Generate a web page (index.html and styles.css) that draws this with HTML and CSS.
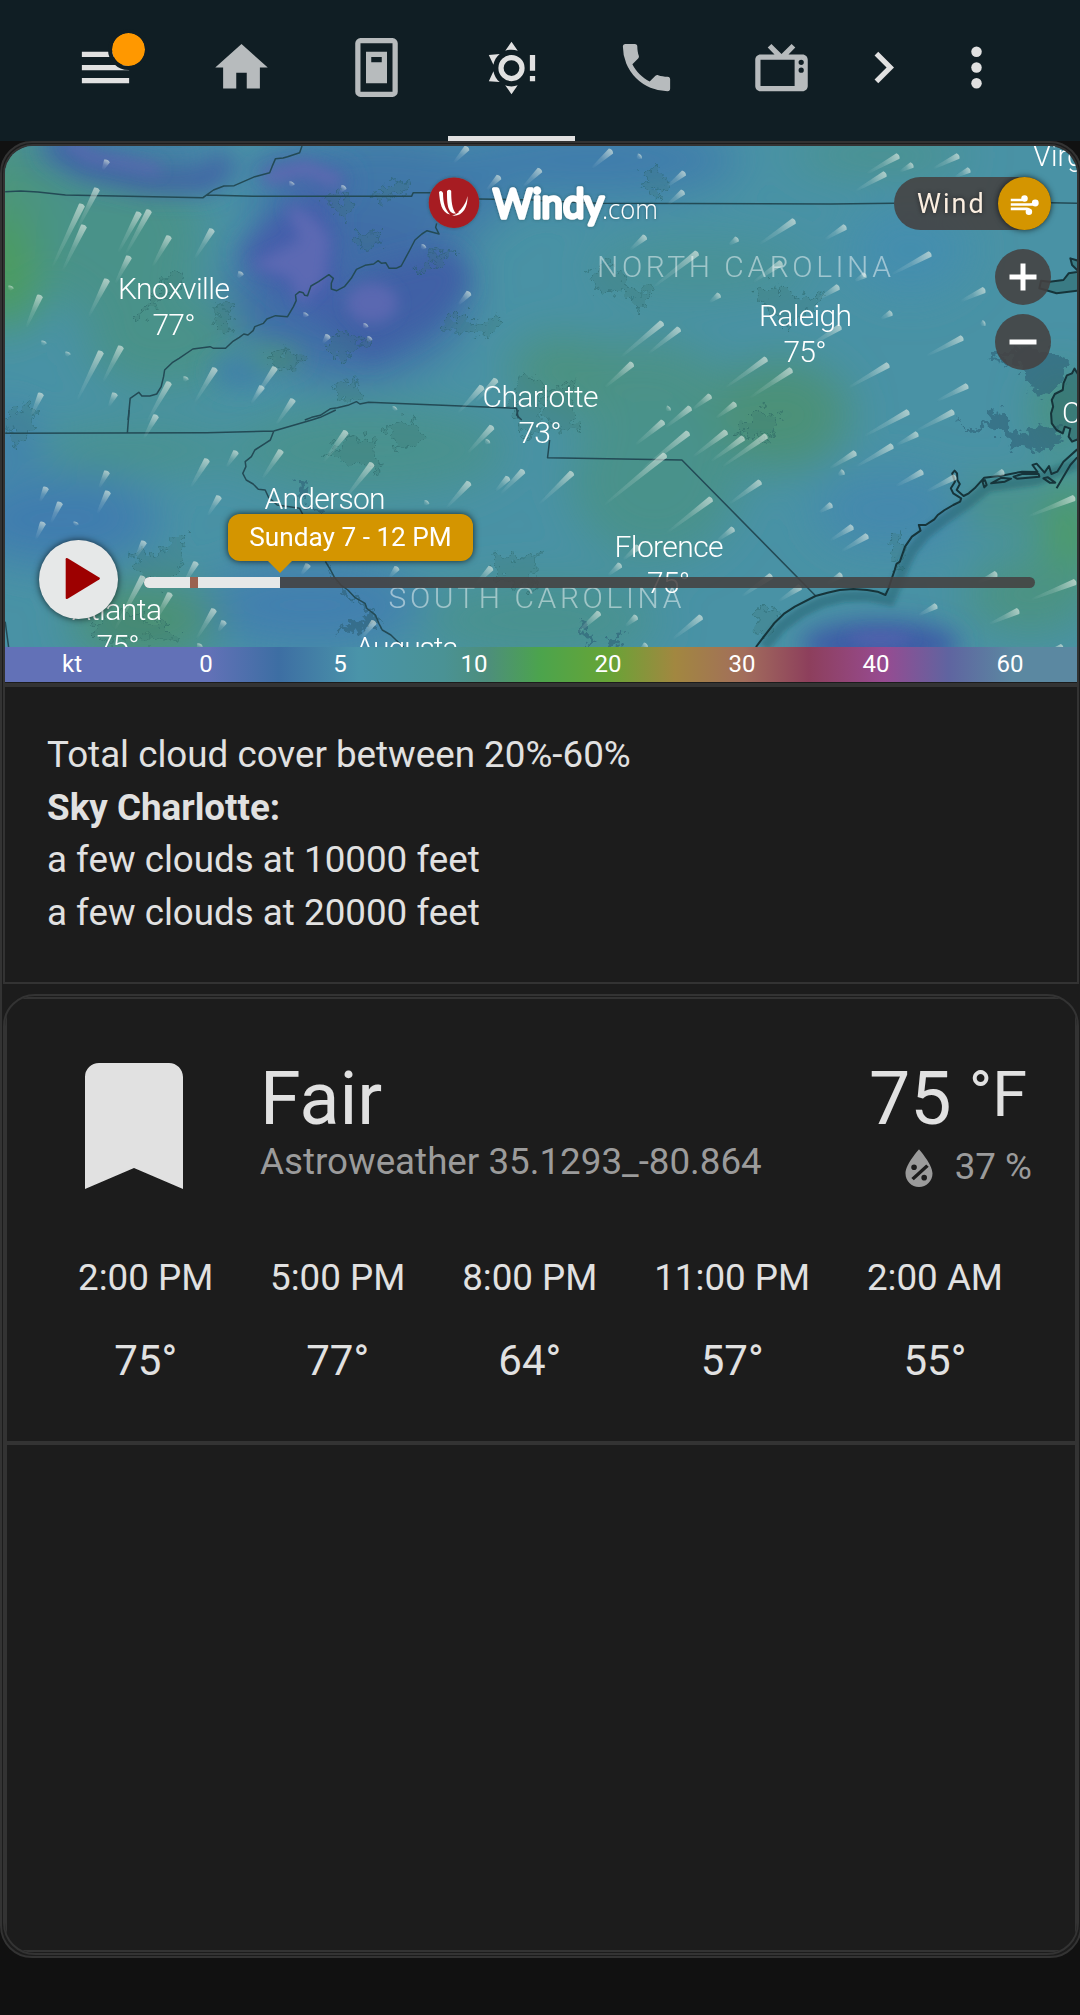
FILE: index.html
```html
<!DOCTYPE html>
<html lang="en">
<head>
<meta charset="utf-8">
<title>Weather</title>
<link rel="stylesheet" href="styles.css">
</head>
<body>
<header class="topbar">
  <button class="menu">
    <svg class="icon" viewBox="0 0 24 24"><path d="M3 6h18v2H3zM3 11h18v2H3zM3 16h18v2H3z"/></svg>
    <span class="dot"></span>
  </button>
  <nav class="tabs">
    <a class="tab"><svg class="icon" viewBox="0 0 24 24"><path d="M10 20v-6h4v6h5v-8h3L12 3 2 12h3v8z"/></svg></a>
    <a class="tab"><svg class="icon" viewBox="0 0 24 24"><path fill-rule="evenodd" d="M5.9 .8H18.1A2 2 0 0 1 20.1 2.8V21.2A2 2 0 0 1 18.1 23.2H5.9A2 2 0 0 1 3.9 21.2V2.800A2 2 0 0 1 5.900 .8zM5.9 2.800V21.200H18.100V2.800zM8 6h8v12H8zM10 8v2h4V8z"/></svg></a>
    <a class="tab active"><svg class="icon" viewBox="0 0 24 24"><path d="M12,7A5,5 0 0,1 17,12A5,5 0 0,1 12,17A5,5 0 0,1 7,12A5,5 0 0,1 12,7M12,9A3,3 0 0,0 9,12A3,3 0 0,0 12,15A3,3 0 0,0 15,12A3,3 0 0,0 12,9M12,2L14.390,5.420C13.650,5.150 12.840,5 12,5C11.160,5 10.350,5.150 9.610,5.420L12,2M3.340,7L7.500,6.650C6.900,7.160 6.360,7.780 5.940,8.500C5.500,9.240 5.250,10 5.110,10.790L3.340,7M3.360,17L5.120,13.230C5.260,14 5.530,14.780 5.950,15.500C6.370,16.240 6.910,16.860 7.500,17.370L3.360,17M12,22L9.590,18.560C10.330,18.830 11.140,19 12,19C12.820,19 13.630,18.830 14.370,18.560L12,22M19,13V7h2v6zM19,17v-2h2v2z"/></svg></a>
    <a class="tab"><svg class="icon" viewBox="0 0 24 24"><path d="M6.620,10.790C8.060,13.620 10.380,15.940 13.210,17.380L15.410,15.180C15.690,14.900 16.080,14.820 16.430,14.930C17.550,15.300 18.750,15.500 20,15.500A1,1 0 0,1 21,16.500V20A1,1 0 0,1 20,21A17,17 0 0,1 3,4A1,1 0 0,1 4,3H7.500A1,1 0 0,1 8.500,4C8.500,5.250 8.700,6.450 9.070,7.570C9.180,7.920 9.100,8.310 8.820,8.590L6.620,10.790Z"/></svg></a>
    <a class="tab"><svg class="icon" viewBox="0 0 24 24"><path fill-rule="evenodd" d="M8.160,3L6.750,4.410L9.340,7H4C2.890,7 2,7.890 2,9V19C2,20.110 2.890,21 4,21H20C21.110,21 22,20.110 22,19V9C22,7.890 21.110,7 20,7H14.660L17.250,4.410L15.840,3L12,6.840ZM4,9H17V19H4ZM19.500,9a1,1 0 1,1 0,2a1,1 0 1,1 0,-2M19.500,12a1,1 0 1,1 0,2a1,1 0 1,1 0,-2"/></svg></a>
  </nav>
  <button class="next"><svg class="icon" viewBox="0 0 24 24"><path d="M8.590,16.580L13.170,12L8.590,7.410L10,6L16,12L10,18Z"/></svg></button>
  <button class="more"><svg class="icon" viewBox="0 0 24 24"><circle cx="12" cy="6" r="2"/><circle cx="12" cy="12" r="2"/><circle cx="12" cy="18" r="2"/></svg></button>
</header>

<main class="stack">
  <section class="map-card">
    <div class="map">
      <svg class="terrain" viewBox="5 146 1072 501">
        <defs>
          <filter id="soft" x="-50%" y="-50%" width="200%" height="200%"><feGaussianBlur stdDeviation="22"/></filter>
          <filter id="mid" x="-50%" y="-50%" width="200%" height="200%"><feGaussianBlur stdDeviation="12"/></filter>
          <filter id="fine" x="-50%" y="-50%" width="200%" height="200%"><feGaussianBlur stdDeviation="7"/></filter>
          <filter id="feather"><feGaussianBlur stdDeviation=".7"/></filter>
          <filter id="ragged" filterUnits="userSpaceOnUse" x="0" y="140" width="1080" height="520"><feTurbulence type="fractalNoise" baseFrequency=".11" numOctaves="3" seed="4"/><feDisplacementMap in="SourceGraphic" scale="24" xChannelSelector="R" yChannelSelector="G"/></filter>
          <filter id="glow" x="-20%" y="-40%" width="140%" height="180%"><feDropShadow dx="0" dy="0" stdDeviation="1.800" flood-color="#244" flood-opacity=".6"/></filter>
          <linearGradient id="tail"><stop offset="0" stop-color="#fff" stop-opacity="0"/><stop offset=".5" stop-color="#dce8e0" stop-opacity=".2"/><stop offset="1" stop-color="#dce8e0" stop-opacity=".68"/></linearGradient>
        </defs>
        <rect x="0" y="140" width="1080" height="520" fill="#4992a5"/>
        <g filter="url(#soft)">
          <ellipse cx="5" cy="245" rx="45" ry="85" fill="#4c9b60"/>
          <ellipse cx="30" cy="175" rx="60" ry="50" fill="#4b957b"/>
          <ellipse cx="120" cy="240" rx="85" ry="80" fill="#4a9289"/>
          <ellipse cx="165" cy="340" rx="80" ry="50" fill="#4a9289"/>
          <ellipse cx="380" cy="190" rx="130" ry="60" fill="#4078a8"/>
          <ellipse cx="350" cy="290" rx="120" ry="90" fill="#3f6da7"/>
          <ellipse cx="590" cy="160" rx="150" ry="38" fill="#417dac"/>
          <ellipse cx="120" cy="150" rx="100" ry="22" fill="#4078a8"/>
          <ellipse cx="60" cy="520" rx="100" ry="45" fill="#417daf"/>
          <ellipse cx="10" cy="440" rx="25" ry="30" fill="#417daf"/>
          <ellipse cx="310" cy="605" rx="110" ry="45" fill="#4280af"/>
          <ellipse cx="780" cy="415" rx="70" ry="55" fill="#4c9178"/>
          <ellipse cx="640" cy="385" rx="85" ry="45" fill="#4b9287"/>
          <ellipse cx="655" cy="480" rx="85" ry="80" fill="#4a928b"/>
          <ellipse cx="560" cy="370" rx="50" ry="35" fill="#4b9280"/>
          <ellipse cx="370" cy="450" rx="140" ry="45" fill="#4a928e"/>
          <ellipse cx="145" cy="620" rx="75" ry="40" fill="#4b9174"/>
          <ellipse cx="140" cy="450" rx="100" ry="22" fill="#4a928c"/>
          <ellipse cx="540" cy="620" rx="120" ry="40" fill="#49928f"/>
          <ellipse cx="1070" cy="540" rx="28" ry="65" fill="#4e9c62"/>
          <ellipse cx="1030" cy="595" rx="65" ry="40" fill="#4b9383"/>
          <ellipse cx="1000" cy="505" rx="65" ry="20" fill="#4b9383"/>
          <ellipse cx="890" cy="510" rx="75" ry="40" fill="#4489ad"/>
          <ellipse cx="910" cy="250" rx="60" ry="45" fill="#458eae"/>
          <ellipse cx="700" cy="270" rx="110" ry="30" fill="#4a9295"/>
          <ellipse cx="880" cy="155" rx="90" ry="16" fill="#4b9388"/>
          <ellipse cx="1060" cy="410" rx="24" ry="40" fill="#4a9378"/>
        </g>
        <g filter="url(#mid)">
          <path d="M50 140L85 163L150 180L205 180L230 160" fill="none" stroke="#3f60a5" stroke-width="24"/>
          <ellipse cx="240" cy="372" rx="28" ry="16" fill="#4080a9"/>
          <ellipse cx="275" cy="357" rx="28" ry="10" fill="#4b937f"/>
          <path d="M240 255L280 210L330 195L340 290L320 320L280 290Z" fill="#455fab"/>
          <path d="M320 320L370 270L450 250L470 280L440 320L370 360Z" fill="#3f61a6"/>
          <path d="M250 165L290 160L350 172L345 198L290 190Z" fill="#4468a9"/>
          <ellipse cx="880" cy="645" rx="80" ry="24" fill="#3c5ca6"/>
        </g>
        <g filter="url(#fine)">
          <path d="M66 140L90 157L160 170" fill="none" stroke="#5f69b3" stroke-width="8"/>
          <path d="M265 178L305 168L340 182" fill="none" stroke="#6069b2" stroke-width="12"/>
          <path d="M285 205Q315 210 330 240L325 280L300 305L290 278L250 265L300 240Z" fill="#5c69b3"/>
          <ellipse cx="372" cy="303" rx="26" ry="20" fill="#5a68b1"/>
          <ellipse cx="880" cy="639" rx="32" ry="6" fill="#5463ae"/>
        </g>

        <g class="urban" filter="url(#ragged)">
          <path d="M130 320L145 305L160 290L170 270L182 275L180 290L160 300L145 312L132 322Z"/>
          <path d="M215 305H230L232 320L225 335L215 325Z"/>
          <path d="M320 195L340 192L350 205L348 220L330 208ZM375 200L385 185L415 177L405 190L390 200ZM355 235L380 232L378 245L362 250ZM415 275L430 255L455 250L440 262L425 270Z"/>
          <path d="M265 355L290 350L305 357L285 372ZM325 345L340 330L370 343L350 350L345 365ZM335 385L355 378L360 400L340 400Z"/>
          <path d="M440 330L460 310L475 325L500 318L490 335L460 330ZM520 375L540 380V430L525 440L510 405Z"/>
          <path d="M590 275L610 262L630 290L655 290L640 310L625 292L600 290ZM755 290L780 285L795 300L825 290L810 310L785 330L770 310Z"/>
          <path d="M325 455L350 435L375 440L380 470L355 465ZM385 425L415 420L425 440L400 450Z"/>
          <path d="M540 385L560 390L580 375L570 400L580 430L550 430ZM735 435L760 410L780 415L770 440Z"/>
          <path d="M130 550L155 555L185 530L180 570L160 590L140 570ZM90 630L120 610L165 625L180 640H100Z"/>
          <path d="M5 420L30 400L35 430L15 445ZM490 555L520 560L535 550V590L500 580ZM760 605L780 612L765 640L755 625ZM890 540L900 530L905 550L895 570Z"/>
          <path d="M642 172L655 168L668 182L660 200L650 188Z"/>
        </g>
        <g class="water" filter="url(#ragged)">
          <path d="M992 350L1005 372L1002 352L1025 372L1030 392L1045 395L1062 382L1068 362L1045 350Z"/>
          <path d="M955 420L972 430L990 422L992 408L1005 415L1015 435L1040 428L1060 425L1058 445L1032 452L1012 447L1000 432L988 428L972 434Z"/>
          <path d="M297 480L305 475L310 485L300 500L318 510L330 530L300 500ZM335 635L352 622L375 615L370 628ZM578 622L588 645H595L583 620ZM610 640L620 632L618 648H608Z"/>
          <path d="M325 560L345 590L375 610L382 628L374 616L340 590Z"/>
        </g>

        <g class="borders">
          <path transform="translate(0 140) scale(.34438 .33333)" d="M15 155L60 153L110 156L190 165L590 173L600 165L735 169L1195 169L1200 158L1250 158M1391 177L1568 180M877 18L870 38L835 50L822 54L800 56L790 80L783 98L740 110L700 128L680 137L650 138L620 150L590 172M1268 250L1265 262L1275 282L1240 272L1225 282L1205 300L1190 330L1165 378L1150 385L1130 385L1120 368L1108 370L1098 362L1085 372L1060 376L1035 388L1020 415L1000 440L978 452L962 447V430L968 415L955 404L925 425L903 438L893 467L885 466L880 458L870 455L858 465L860 482L852 500L835 530L800 527L775 537L765 550L740 560L735 572L720 585L708 582L695 592L675 605L655 625H620L610 620L560 627L520 655L500 668L478 690L475 710L468 740L455 762L435 768L412 768L403 757L378 775L372 840M885 840L905 832L930 826L960 806L980 803L1010 796L1035 785L1045 792L1070 787L1500 805L1505 835"/>
          <path transform="translate(540 140) scale(.34438 .33333)" d="M0 182L170 190L845 192L1028 190M1484 188L1560 190"/>
          <path transform="translate(0 410) scale(.34438 .33333)" d="M375 0L370 67M15 70L600 68L795 63L905 30L930 22L975 0M795 63L785 90L770 100L740 120L730 140L712 155L714 170L705 190L715 210L735 222L750 238L770 240L780 262L805 285L840 290L870 295L880 315M945 455L960 480L970 500L990 525L1010 540L1030 562L1060 580L1065 595L1090 615L1100 640L1110 660L1135 675L1150 690L1172 711M1505 0L1500 15L1515 30M15 635L25 711"/>
          <path transform="translate(540 410) scale(.34438 .33333)" d="M28 90L22 143L412 150L800 557"/>
        </g>
        <path class="shore-shade" filter="url(#fine)" transform="translate(540 410) scale(.34438 .33333)" d="M650 711L700 650L760 605L820 575L880 560L950 558L1015 570L1040 510L1060 460L1080 420L1120 370L1170 330L1240 280L1300 230L1440 210L1560 160"/>
        <g class="coast">
          <path transform="translate(540 410) scale(.34438 .33333)" d="M627 711L650 680L680 640L710 610L740 590L800 558L835 548L870 540L910 537L950 540L980 545L1003 555L1012 535L1020 510L1030 480L1035 462L1045 455L1055 425L1060 410L1080 380L1105 362L1100 345L1120 345L1145 328L1155 315L1175 300L1200 285L1220 275L1223 265L1200 250L1193 235L1205 215L1197 190L1204 182L1211 190L1212 210L1219 222L1210 240L1230 258L1245 250L1262 235L1290 203L1340 197L1400 185L1445 186L1430 165L1442 161L1465 188L1478 168L1485 192L1502 185L1520 155L1560 118M1310 220L1340 203L1368 206L1350 215ZM1375 200L1400 192H1448L1450 200L1385 206ZM1285 215L1292 210L1297 225L1290 232ZM1462 205L1475 202L1496 218H1480ZM1500 235L1540 165L1560 142"/>
          <path class="sound" transform="translate(540 140) scale(.34438 .33333)" d="M1562 362L1540 355L1545 375L1565 395L1535 400L1520 420L1480 425L1455 422L1450 445L1500 460L1562 452M1562 702L1552 686L1545 700L1530 706L1520 730L1518 750L1495 762L1486 780L1490 800L1484 820L1486 850L1500 870L1518 880L1524 860L1540 866L1535 890L1545 905L1562 898"/>
        </g>

        <g id="streaks" filter="url(#feather)"></g>

        <g class="state">
          <text x="597" y="276.500" textLength="294">NORTH CAROLINA</text>
          <text x="388.500" y="607.500" textLength="293">SOUTH CAROLINA</text>
        </g>
        <g class="city">
          <text x="174" y="298.500" textLength="112">Knoxville</text><text x="174" y="334.500" textLength="43">77°</text>
          <text x="805.500" y="326" textLength="93">Raleigh</text><text x="805" y="362" textLength="43">75°</text>
          <text x="540.500" y="407" textLength="116">Charlotte</text><text x="540" y="443" textLength="43">73°</text>
          <text x="325" y="508.500" textLength="121">Anderson</text>
          <text x="669" y="557" textLength="109">Florence</text><text x="668.500" y="592.500" textLength="43">75°</text>
          <text x="117" y="620" textLength="90">Atlanta</text><text x="118" y="656" textLength="43">75°</text>
          <text x="407" y="658" textLength="103">Augusta</text>
          <text class="edge" x="1033" y="166">Virginia Beach</text>
          <text class="edge" x="1062" y="422.500">Cape Hatteras</text>
        </g>

        <g filter="url(#glow)">
          <circle cx="454" cy="202.700" r="25.300" fill="#a71e22"/>
          <path fill="#fff" d="M439 192q2.500-2.500 4 1c0 10 2 16 7 21.500-9-2-10-12-11-22.500M447 191q2.500-2.500 4.200 0c0 10 .800 18 4.800 22.500-9 1-9-12-9-22.500M452 215.500C460 214 465 207 467.500 196C468 208 462 217 452 215.500M458 212C462 209 465 204 467 199C466 207 463 211 458 212"/>
          <text class="brand" x="493" y="217.500" textLength="111" lengthAdjust="spacingAndGlyphs">Windy</text>
          <text class="brand-tld" x="602" y="219" textLength="56" lengthAdjust="spacingAndGlyphs">.com</text>
        </g>
      </svg>

      <div class="layer">
        <span class="layer-name">Wind</span>
        <span class="layer-icon"><svg viewBox="0 0 54 54"><g fill="none" stroke="#fff" stroke-width="2.600"><path d="M13 23.500h11q4 0 3-4M13 28h19q5 0 6-1M13 32.500h16q3 0 3 3"/></g><g fill="#fff"><circle cx="27" cy="22" r="3.300"/><circle cx="38" cy="26.500" r="3.500"/><circle cx="31.500" cy="35.500" r="3.300"/></g></svg></span>
      </div>
      <div class="zoom">
        <button><svg viewBox="0 0 56 56"><path d="M14.500 25.500h11v-11h5v11h11v5h-11v11h-5v-11h-11z"/></svg></button>
        <button><svg viewBox="0 0 56 56"><path d="M14.500 25.500h27v5h-27z"/></svg></button>
      </div>
      <div class="track"><span class="played"></span><span class="now"></span></div>
      <div class="stamp">Sunday 7 - 12 PM</div>
      <button class="play"><svg viewBox="0 0 80 80"><path d="M27 19.500q0-2 2-1L61 38q1.500 1 0 2L29 59.500q-2 1-2-1z"/></svg></button>
    </div>
    <div class="legend"><span>kt</span><span>0</span><span>5</span><span>10</span><span>20</span><span>30</span><span>40</span><span>60</span></div>
  </section>

  <section class="note">
    <p>Total cloud cover between 20%-60%</p>
    <p><b>Sky Charlotte:</b></p>
    <p>a few clouds at 10000 feet</p>
    <p>a few clouds at 20000 feet</p>
  </section>

  <section class="panel">
    <article class="weather">
      <div class="current">
        <svg class="condition" viewBox="0 0 24 24"><path d="M17,3H7A2,2 0 0,0 5,5V21L12,18L19,21V5C19,3.890 18.100,3 17,3Z"/></svg>
        <div class="summary"><h1>Fair</h1><p>Astroweather 35.1293_-80.864</p></div>
        <div class="reading">
          <div class="temp">75<span class="unit">°F</span></div>
          <div class="humidity"><svg viewBox="0 0 24 24"><path fill-rule="evenodd" d="M12 3.250S6 10 6 14C6 17.310 8.690 20 12 20S18 17.310 18 14C18 10 12 3.250 12 3.250M9.800 9.950a1.250 1.250 0 1 1 0 2.500a1.250 1.250 0 1 1 0-2.500M15.200 10L16.300 11L9.700 17L8.600 16ZM14.300 14.600a1.250 1.250 0 1 1 0 2.500a1.250 1.250 0 1 1 0-2.500"/></svg><span>37 %</span></div>
        </div>
      </div>
      <div class="forecast">
        <div><span>2:00 PM</span><b>75°</b></div>
        <div><span>5:00 PM</span><b>77°</b></div>
        <div><span>8:00 PM</span><b>64°</b></div>
        <div><span>11:00 PM</span><b>57°</b></div>
        <div><span>2:00 AM</span><b>55°</b></div>
      </div>
    </article>
    <article class="blank"></article>
  </section>
</main>
<script src="wind.js"></script>
</body>
</html>
```
FILE: styles.css
```css
* { box-sizing: border-box; }
body { margin: 0; background: #111; color: #e1e1e1; font-family: Roboto, "Liberation Sans", sans-serif; overflow: hidden; font-size: 36.75px; }
button { border: 0; padding: 0; background: none; display: block; }
h1, p { margin: 0; font-weight: 400; }
svg { display: block; }

.topbar { height: 141px; background: #101e24; display: flex; align-items: center; padding-left: 73.5px; }
.icon { width: 63px; height: 63px; fill: #e1e1e1; transform: translateY(-3px); }
.menu { position: relative; width: 63px; margin-right: 37px; }
.menu .dot { position: absolute; left: 34.500px; top: -10.500px; width: 41px; height: 41px; border-radius: 50%; border: 4.500px solid #101e24; background: #ff9800; background-clip: padding-box; }
.tabs { display: flex; height: 141px; }
.tab { width: 135px; display: flex; align-items: center; justify-content: center; }
.tab:not(.active) .icon { fill: #b7bbbd; }
.tab.active { width: 127px; margin: 0 4px; border-bottom: 5px solid #e1e1e1; }
.tab.active .icon { transform: translateY(-.5px); }
.next { margin-left: 3px; }
.more { margin-left: 30.500px; }

.stack { width: 1082px; height: 1817px; border: 2px solid #333; border-radius: 32px; background: #1c1c1c; padding: 1px; display: flex; flex-direction: column; }
.map-card { width: 1076px; height: 541px; border: 2px solid #333; border-radius: 30px 30px 0 0; overflow: hidden; }
.map { position: relative; height: 501px; overflow: hidden; }
.terrain { width: 1072px; height: 501px; }

.urban { fill: #2f6f67; fill-opacity: .22; stroke: #245a5c; stroke-opacity: .4; stroke-width: 1; }
.water { fill: #2b6076; fill-opacity: .6; }
.borders path { fill: none; stroke: #234a55; stroke-width: 1.500; stroke-linejoin: round; vector-effect: non-scaling-stroke; }
.coast path { fill: none; stroke: #16343a; stroke-width: 2; stroke-linejoin: round; vector-effect: non-scaling-stroke; }
.coast .sound { fill: #2b6464; fill-opacity: .5; }
.shore-shade { fill: none; stroke: #1d5360; stroke-opacity: .4; stroke-width: 34; }
.city text { font-size: 30px; font-weight: 300; fill: #fff; text-anchor: middle; }
.city .edge { text-anchor: start; font-size: 29px; }
.state text { font-size: 30px; font-weight: 300; fill: #fff; fill-opacity: .48; }
.brand { font: 400 40px Lato, sans-serif; fill: #fff; stroke: #fff; stroke-width: 3.400; stroke-linejoin: round; }
.brand-tld { font: 300 27px "Open Sans", sans-serif; fill: #fff; }

.layer { position: absolute; left: 889px; top: 31px; width: 157px; height: 53px; border-radius: 27px; background: rgba(68, 65, 65, .88); display: flex; align-items: center; justify-content: space-between; padding-left: 23px; }
.layer-name { font-size: 27px; letter-spacing: 2px; color: #fbeee0; text-shadow: 0 0 4px #222; }
.layer-icon { width: 53px; height: 53px; border-radius: 50%; background: #d49500; box-shadow: 0 0 6px rgba(0, 0, 0, .7); }
.zoom { position: absolute; left: 990px; top: 103px; display: grid; gap: 9px; }
.zoom button { width: 56px; height: 56px; border-radius: 50%; background: rgba(68, 65, 65, .88); }
.zoom path { fill: #fff; }
.track { position: absolute; left: 139px; top: 431px; width: 891px; height: 11px; border-radius: 6px; background: rgba(68, 65, 65, .88); overflow: hidden; display: flex; }
.played { width: 136px; background: #e6e8e8; }
.now { position: absolute; left: 46px; width: 8px; height: 11px; background: #9a6251; }
.stamp { position: absolute; left: 223px; top: 368px; width: 245px; height: 47px; border-radius: 12px; background: #d49500; color: #fff; font-size: 26.200px; line-height: 46px; text-align: center; white-space: nowrap; box-shadow: 0 0 7px rgba(0, 0, 0, .75); }
.stamp::after { content: ""; position: absolute; left: 39px; top: 46px; border: 13.500px solid transparent; border-top-color: #d49500; border-bottom: 0; }
.play { position: absolute; left: 33.500px; top: 393.500px; width: 79px; height: 79px; border-radius: 50%; background: #e6e8e8; box-shadow: 0 0 7px rgba(0, 0, 0, .7); }
.play path { fill: #9d0000; }
.play svg { width: 79px; height: 79px; }

.legend { height: 35px; display: grid; grid-template-columns: repeat(8, 1fr); text-align: center; color: #fff; font-size: 24px; line-height: 35px; background: linear-gradient(90deg, #6271b7 19%, #3d6ea3 25.500%, #4a94a9 33%, #4a9294 41%, #4d8e7c 45%, #4ca44c 50%, #67a436 56.300%, #a28740 62.500%, #a26d5c 69%, #8d3f5c 75%, #974b91 82%, #5f64a0 88%, #5b88a1 94%); }

.note { width: 1076px; height: 299px; border: 2px solid #333; padding: 42px; line-height: 52.500px; margin-bottom: 10px; }

.panel { width: 1076px; height: 961px; border: 2px solid #333; border-radius: 32px; padding-top: 1px; overflow: hidden; }
.weather { height: 446px; border: 2px solid #333; padding: 43px 42px 0 43px; }
.current { display: flex; height: 168px; }
.condition { width: 168px; height: 168px; fill: #e1e1e1; }
.summary { margin-left: 42px; padding-top: 14px; }
.summary h1 { font-size: 73.500px; line-height: 86px; white-space: nowrap; }
.summary p { line-height: 44px; margin-top: -2px; color: #9b9b9b; white-space: nowrap; }
.reading { margin-left: auto; padding-top: 14px; }
.temp { display: flex; justify-content: flex-end; font-size: 73.500px; line-height: 86px; padding-right: 6px; }
.unit { font-size: 63px; line-height: 78px; margin-left: 17px; }
.humidity { display: flex; align-items: center; justify-content: flex-end; color: #9b9b9b; line-height: 44px; margin-top: 4px; padding-right: 1px; }
.humidity svg { width: 54px; height: 54px; fill: #9b9b9b; margin: -9px 9px -11px 0; }
.humidity span { margin-top: -1px; margin-bottom: 1px; }
.forecast { display: flex; justify-content: space-between; margin-top: 43px; padding: 0 30px 0 28px; text-align: center; }
.forecast div { display: flex; flex-direction: column; }
.forecast span { line-height: 44px; padding-top: 3px; }
.forecast b { font-weight: 400; font-size: 42px; line-height: 50px; margin-top: 36px; }
.blank { height: 509px; border: 2px solid #333; }
```
FILE: wind.js
```javascript
// Wind particles: head x, head y, tail length.
const particles = [
  [97,189,45],[82,205,70],[84,226,50],[139,213,45],[149,211,50],[169,237,34],[212,230,34],[129,257,30],[107,280,42],[11,287,4],
  [241,273,6],[40,296,35],[44,342,4],[68,353,4],[101,352,55],[121,347,40],[215,369,40],[186,378,4],[275,368,38],[262,387,20],
  [169,383,45],[41,394,24],[115,394,14],[293,400,30],[156,416,26],[292,183,4],[344,187,6],[306,314,4],[328,336,9],[366,325,4],
  [370,338,5],[469,293,16],[424,246,4],[499,177,18],[540,170,24],[467,148,20],[496,380,30],[482,387,36],[107,161,10],[395,408,3],
  [611,151,26],[640,156,4],[684,173,22],[683,192,20],[898,156,36],[912,165,14],[885,174,34],[958,156,28],[969,170,16],[794,221,42],
  [737,239,10],[845,227,24],[697,253,56],[719,295,12],[662,323,54],[679,329,40],[838,287,24],[865,275,12],[781,263,34],[930,254,44],
  [891,313,12],[984,323,4],[962,338,40],[632,364,36],[766,359,50],[791,370,50],[888,365,46],[967,386,34],[669,408,4],[690,408,32],
  [735,404,24],[908,412,50],[953,412,42],[645,237,20],[984,290,26],[710,396,22],[840,327,34],[207,460,32],[236,452,18],[281,451,34],
  [346,432,38],[372,464,46],[107,472,18],[108,492,24],[46,488,15],[60,503,22],[76,523,3],[43,523,18],[144,542,18],[219,497,22],
  [492,427,36],[488,441,4],[469,483,34],[508,478,18],[523,471,32],[427,502,4],[196,563,26],[143,577,60],[170,594,34],[214,610,34],
  [224,622,11],[200,645,5],[308,565,12],[397,568,12],[491,568,24],[374,622,22],[663,422,36],[688,433,60],[726,432,42],[743,438,40],
  [766,436,54],[665,455,80],[572,473,46],[711,499,56],[760,482,38],[733,529,20],[855,453,30],[892,446,42],[917,434,24],[843,472,6],
  [831,505,14],[852,527,26],[867,536,30],[922,472,30],[955,477,32],[1003,472,14],[1074,498,50],[996,574,22],[1075,582,48],[936,606,20],
  [1018,611,32],[771,576,36],[841,575,18],[800,587,26],[599,613,30],[636,617,14],[701,617,36],[646,645,8],[620,565,16],[638,547,20],[1062,647,24]
];
const layer = document.getElementById("streaks");
for (const [x, y, len] of particles) {
  const turn = -(68 - x * 0.043);
  const p = document.createElementNS("http://www.w3.org/2000/svg", "path");
  p.setAttribute("d", `M${-len} -1L0 -3.2Q2.5 0 0 3.2L${-len} 1Z`);
  p.setAttribute("transform", `translate(${x} ${y}) rotate(${turn})`);
  p.setAttribute("fill", "url(#tail)");
  layer.appendChild(p);
}
```
